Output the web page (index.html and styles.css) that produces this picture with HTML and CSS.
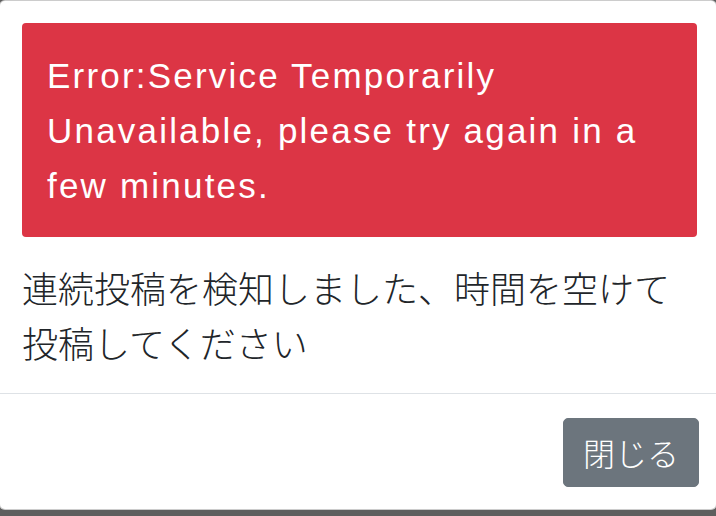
FILE: index.html
```html
<!DOCTYPE html>
<html lang="ja">
<head>
    <meta charset="UTF-8">
    <meta name="viewport" content="width=device-width, initial-scale=1.0">
    <title>エラー</title>
    <link rel="stylesheet" href="styles.css">
</head>
<body>
    <div class="modal-content">
        <div class="modal-body">
            <div class="alert-danger">Error:Service Temporarily Unavailable, please try again in a few minutes.</div>
            <p class="message">連続投稿を検知しました、時間を空けて投稿してください</p>
        </div>
        <div class="modal-footer">
            <button class="btn-secondary" type="button">閉じる</button>
        </div>
    </div>
</body>
</html>
```

FILE: styles.css
```css
* {
    margin: 0;
    padding: 0;
    box-sizing: border-box;
}

body {
    background: #5e5e5e;
    height: 516px;
    overflow: hidden;
    font-family: "Liberation Sans", "Noto Sans CJK JP", sans-serif;
}

.modal-content {
    margin: 0 -1px;
    background: #fff;
    border: 1px solid rgba(0, 0, 0, 0.2);
    border-radius: 6px;
}

.modal-body {
    padding: 22px 19px 23px 22px;
}

.alert-danger {
    background: #dc3545;
    color: #fff;
    border-radius: 4px;
    padding: 25px 25px 24px;
    margin-bottom: 23px;
    font-size: 35px;
    letter-spacing: 2.2px;
    line-height: 55px;
}

.message {
    color: #212529;
    font-family: "Noto Sans CJK JP", sans-serif;
    font-weight: 300;
    font-size: 36px;
    line-height: 55px;
}

.modal-footer {
    display: flex;
    justify-content: flex-end;
    border-top: 1px solid #dee2e6;
    padding: 24px 17px 22px;
}

.btn-secondary {
    background: #6c757d;
    border: 1px solid #6c757d;
    border-radius: 5px;
    color: #fff;
    font-family: "Noto Sans CJK JP", sans-serif;
    font-weight: 300;
    font-size: 32px;
    line-height: 47px;
    padding: 10px 19px;
}
```
